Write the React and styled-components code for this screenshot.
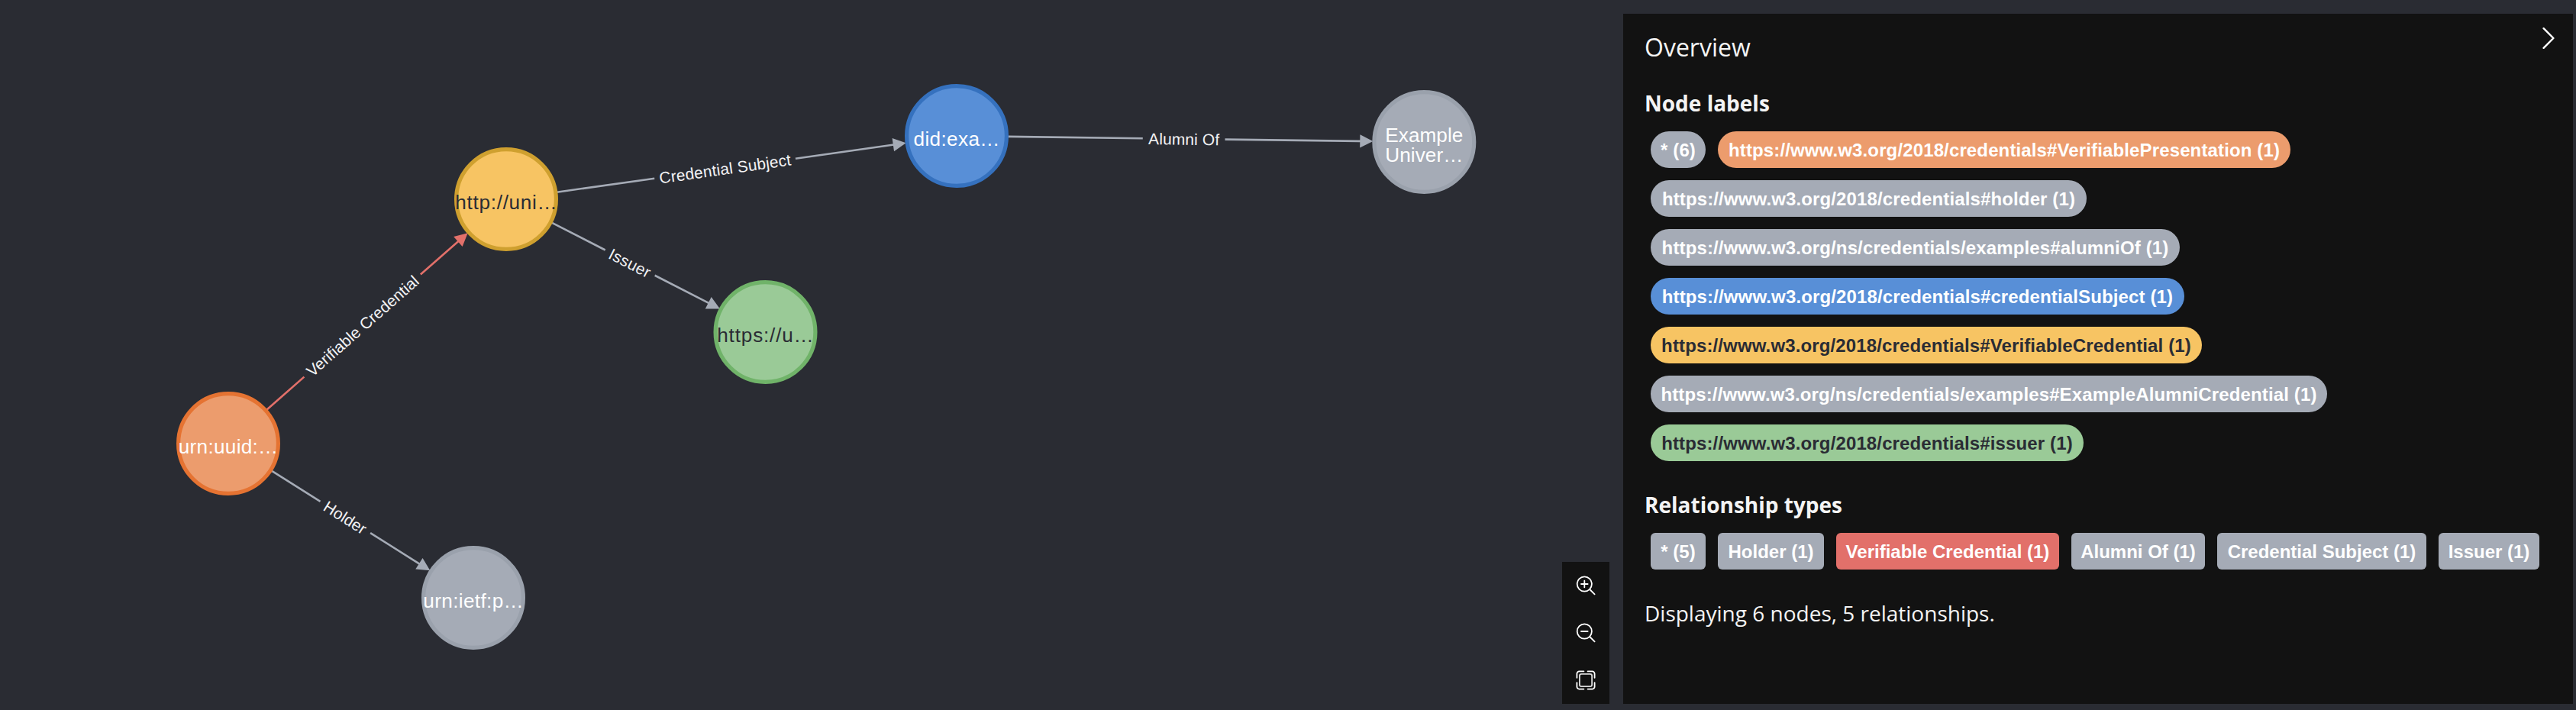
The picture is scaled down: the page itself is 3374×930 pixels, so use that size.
import React from "react";
import styled, { createGlobalStyle } from "styled-components";

const GlobalStyle = createGlobalStyle`
  *, *::before, *::after { box-sizing: border-box; }
  body { margin: 0; background: #2a2c33; }
  h2, h3, p { margin: 0; }
`;

const SANS = '"Liberation Sans", Arial, sans-serif';

const Page = styled.div`
  display: flex;
  width: 3374px;
  height: 930px;
  padding: 0 4px 0 0;
  background: #2a2c33;
  overflow: hidden;
`;

const Canvas = styled.main`
  position: relative;
  flex: 1;
`;

const GraphSvg = styled.svg`
  display: block;
  width: 100%;
  height: 100%;
`;

const NodeCircle = styled.circle`
  fill: ${(p) => p.$fill};
  stroke: ${(p) => p.$border};
  stroke-width: 5.2px;
`;

const NodeCaption = styled.text`
  font: 26.15px ${SANS};
  fill: ${(p) => p.$color};
  text-anchor: middle;
`;

const EdgeCaption = styled.text`
  font: 20.92px ${SANS};
  fill: #f2f2f4;
  text-anchor: middle;
`;

const ZoomControls = styled.div`
  position: absolute;
  right: 18px;
  bottom: 8px;
  display: flex;
  flex-direction: column;
  width: 62px;
  background: #121212;
`;

const ZoomButton = styled.button`
  display: flex;
  align-items: center;
  justify-content: center;
  width: 62px;
  height: 62px;
  padding: 0;
  border: 0;
  background: transparent;
  color: #fff;
`;

const Icon = styled.svg`
  display: block;
  fill: none;
  stroke: currentColor;
  stroke-linecap: round;
  stroke-linejoin: round;
`;

const Panel = styled.aside`
  width: 1244px;
  height: 904px;
  margin-top: 18px;
  padding: 18px 24px 0 28px;
  background: #121212;
  color: #f4f4f4;
  font-family: "Open Sans", "Noto Sans", sans-serif;
`;

const PanelHeader = styled.header`
  display: flex;
  justify-content: space-between;
  height: 76px;
`;

const Title = styled.h2`
  font-size: 32px;
  font-weight: 400;
  line-height: 52px;
`;

const CollapseButton = styled.button`
  display: flex;
  width: 16px;
  height: 28px;
  padding: 0;
  border: 0;
  background: transparent;
  color: #fff;
`;

const Section = styled.section`
  & + & {
    margin-top: 26px;
  }
`;

const SectionTitle = styled.h3`
  height: 52px;
  font-size: 28px;
  font-weight: 700;
  line-height: 46px;
`;

const ChipList = styled.div`
  display: flex;
  flex-wrap: wrap;
  gap: 16px;
  padding: 8px;
`;

const Chip = styled.span`
  display: flex;
  align-items: center;
  justify-content: center;
  width: ${(p) => p.$width}px;
  height: 48px;
  padding-top: 2px;
  border-radius: ${(p) => (p.$square ? "6px" : "24px")};
  background: ${(p) => p.$fill};
  color: ${(p) => p.$color || "#fff"};
  font: bold 24px/28px ${SANS};
  letter-spacing: ${(p) => p.$tracking}px;
  white-space: nowrap;
`;

const Summary = styled.p`
  margin-top: 25px;
  font-size: 28px;
  line-height: 48px;
`;

const C = {
  grey: "#a5abb6",
  orange: "#ec9c6d",
  yellow: "#f7c463",
  blue: "#588fd7",
  green: "#9aca97",
  red: "#e2706a",
  dark: "#2a2c34",
};

const nodes = {
  presentation: { x: 299, y: 581, fill: C.orange, border: "#e57332", lines: [["urn:uuid:…", 130.5]] },
  holder: { x: 620, y: 783, fill: C.grey, border: "#9aa1ac", lines: [["urn:ietf:p…", 131.5]] },
  credential: { x: 663, y: 261, fill: C.yellow, border: "#cfa02f", color: C.dark, lines: [["http://uni…", 133.5]] },
  issuer: { x: 1002.5, y: 435, fill: C.green, border: "#70b369", color: C.dark, lines: [["https://u…", 126.5]] },
  subject: { x: 1253, y: 178, fill: C.blue, border: "#3571be", lines: [["did:exa…", 113]] },
  university: {
    x: 1865.3,
    y: 186,
    fill: C.grey,
    border: "#9aa1ac",
    lines: [["Example", 102], ["Univer…", 102]],
  },
};

const edges = [
  { from: "presentation", to: "credential", label: "Verifiable Credential", width: 188, gap: 203, color: C.red },
  { from: "presentation", to: "holder", label: "Holder", width: 62, gap: 77.5, color: C.grey },
  { from: "credential", to: "subject", label: "Credential Subject", width: 174, gap: 186.5, color: C.grey },
  { from: "credential", to: "issuer", label: "Issuer", width: 58.5, gap: 73, color: C.grey },
  { from: "subject", to: "university", label: "Alumni Of", width: 93, gap: 107.7, color: C.grey },
];

const RADIUS = 67;
const HEAD = 17;

function Edge({ from, to, label, width, gap, color }) {
  const a = nodes[from];
  const b = nodes[to];
  const length = Math.hypot(b.x - a.x, b.y - a.y);
  const angle = (Math.atan2(b.y - a.y, b.x - a.x) * 180) / Math.PI;
  const tip = length - RADIUS;
  const base = tip - HEAD;
  const mid = (RADIUS + base) / 2;
  return (
    <g transform={`translate(${a.x} ${a.y}) rotate(${angle})`}>
      <path
        d={`M${RADIUS} 0H${mid - gap / 2}M${mid + gap / 2} 0H${base + 1}`}
        stroke={color}
        strokeWidth="2.6"
      />
      <path d={`M${base} -8.7L${tip} 0L${base} 8.7Z`} fill={color} />
      <EdgeCaption x={mid} y="7.8" textLength={width}>
        {label}
      </EdgeCaption>
    </g>
  );
}

function Node({ x, y, fill, border, color = "#fff", lines }) {
  const first = lines.length > 1 ? 0 : 13;
  return (
    <g>
      <NodeCircle cx={x} cy={y} r="65.4" $fill={fill} $border={border} />
      {lines.map(([line, width], i) => (
        <NodeCaption
          key={line}
          x={x}
          y={y + first + i * 26.15}
          textLength={width}
          $color={color}
        >
          {line}
        </NodeCaption>
      ))}
    </g>
  );
}

const W3 = "https://www.w3.org/";

const labelChips = [
  { text: "* (6)", width: 72, fill: C.grey },
  { text: `${W3}2018/credentials#VerifiablePresentation (1)`, width: 750, fill: C.orange },
  { text: `${W3}2018/credentials#holder (1)`, width: 571, fill: C.grey },
  { text: `${W3}ns/credentials/examples#alumniOf (1)`, width: 693, fill: C.grey },
  { text: `${W3}2018/credentials#credentialSubject (1)`, width: 699, fill: C.blue },
  { text: `${W3}2018/credentials#VerifiableCredential (1)`, width: 722, fill: C.yellow, color: C.dark },
  { text: `${W3}ns/credentials/examples#ExampleAlumniCredential (1)`, width: 886, fill: C.grey },
  { text: `${W3}2018/credentials#issuer (1)`, width: 567, fill: C.green, color: C.dark },
];

const typeChips = [
  { text: "* (5)", width: 72, fill: C.grey },
  { text: "Holder (1)", width: 139, fill: C.grey },
  { text: "Verifiable Credential (1)", width: 292, fill: C.red },
  { text: "Alumni Of (1)", width: 175, fill: C.grey },
  { text: "Credential Subject (1)", width: 274, fill: C.grey },
  { text: "Issuer (1)", width: 132, fill: C.grey },
];

function Chips({ items, square, tracking }) {
  return (
    <ChipList>
      {items.map((c) => (
        <Chip
          key={c.text}
          $width={c.width}
          $fill={c.fill}
          $color={c.color}
          $square={square}
          $tracking={tracking}
        >
          {c.text}
        </Chip>
      ))}
    </ChipList>
  );
}

function Magnifier({ plus }) {
  return (
    <Icon width="26" height="26" viewBox="0 0 26 26" strokeWidth="1.8">
      <circle cx="11.3" cy="11" r="9.6" />
      <path d="M18.2 18L24.6 24.4M7 11H15.6" />
      {plus && <path d="M11.3 6.7V15.3" />}
    </Icon>
  );
}

function FitIcon() {
  return (
    <Icon width="26" height="26" viewBox="0 0 26 26" strokeWidth="1.8">
      <path d="M1.4 9.8V4.4a3 3 0 0 1 3-3H10.4M15.6 1.4H21.6a3 3 0 0 1 3 3V9.8M24.6 16.2V21.6a3 3 0 0 1 -3 3H15.6M10.4 24.6H4.4a3 3 0 0 1 -3 -3V16.2" />
      <rect x="4.9" y="4.9" width="16.2" height="16.2" rx="2.4" strokeOpacity="0.85" />
    </Icon>
  );
}

export default function App() {
  return (
    <>
      <GlobalStyle />
      <Page>
        <Canvas>
          <GraphSvg viewBox="0 0 2126 930">
            {edges.map((e) => (
              <Edge key={e.label} {...e} />
            ))}
            {Object.entries(nodes).map(([id, n]) => (
              <Node key={id} {...n} />
            ))}
          </GraphSvg>
          <ZoomControls>
            <ZoomButton aria-label="Zoom in">
              <Magnifier plus />
            </ZoomButton>
            <ZoomButton aria-label="Zoom out">
              <Magnifier />
            </ZoomButton>
            <ZoomButton aria-label="Zoom to fit">
              <FitIcon />
            </ZoomButton>
          </ZoomControls>
        </Canvas>
        <Panel>
          <PanelHeader>
            <Title>Overview</Title>
            <CollapseButton aria-label="Collapse panel">
              <Icon width="16" height="28" viewBox="0 0 16 28" strokeWidth="2.4">
                <path d="M1.6 1.2L14.4 14L1.6 26.8" />
              </Icon>
            </CollapseButton>
          </PanelHeader>
          <Section>
            <SectionTitle>Node labels</SectionTitle>
            <Chips items={labelChips} tracking={0.13} />
          </Section>
          <Section>
            <SectionTitle>Relationship types</SectionTitle>
            <Chips items={typeChips} tracking={0} square />
          </Section>
          <Summary>Displaying 6 nodes, 5 relationships.</Summary>
        </Panel>
      </Page>
    </>
  );
}
